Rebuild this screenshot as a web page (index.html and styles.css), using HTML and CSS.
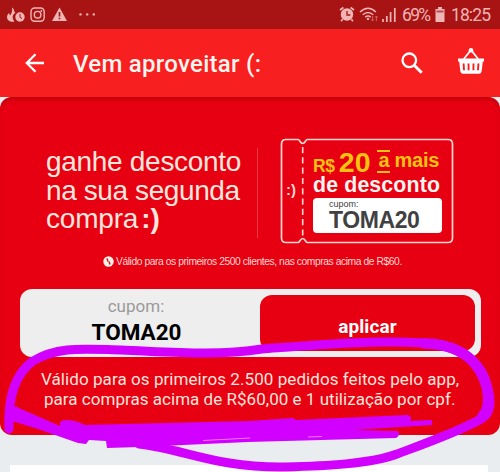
FILE: index.html
```html
<!DOCTYPE html>
<html lang="pt-BR">
<head>
<meta charset="utf-8">
<title>Vem aproveitar (:</title>
<link rel="stylesheet" href="styles.css">
</head>
<body>
<div class="screen">
  <header class="status">
    <svg class="status-left" width="100" height="29" viewBox="0 0 100 29">
      <path d="M12 7.500c3 2 1.500 4 3.500 5.500-3 1-4 5-1 8.500-4 1-7.500-1-7.500-4.500 0-2 1-3 2-4l1 2.500c2-2 2.500-5 2-8z" fill="#efb5b5"/>
      <circle cx="20" cy="17" r="4.700" fill="#efb5b5"/><path d="M20 14v3.300l2 1.200" fill="none" stroke="#a81414"/>
      <rect x="31" y="8" width="13.200" height="13.200" rx="3.600" fill="none" stroke="#efb5b5" stroke-width="1.400"/>
      <circle cx="37.600" cy="14.700" r="3.300" fill="none" stroke="#efb5b5" stroke-width="1.400"/><circle cx="41.400" cy="11" r=".9" fill="#efb5b5"/>
      <path d="M59.500 7.500L67 21H52z" fill="#efb5b5"/><path d="M59.500 12v4.400m0 1.300v1.600" stroke="#a81414" stroke-width="1.700"/>
      <g fill="#efb5b5"><circle cx="80.500" cy="14.400" r="1.200"/><circle cx="87.200" cy="14.400" r="1.200"/><circle cx="93.800" cy="14.400" r="1.200"/></g>
    </svg>
    <div class="status-right">
      <svg width="60" height="29" viewBox="0 0 60 29">
        <circle cx="9" cy="14.500" r="6.200" fill="#efb5b5"/>
        <path d="M2 10l3.400-2.500M16 10l-3.400-2.500M4.600 19.200l-1.500 2M13.400 19.200l1.500 2" stroke="#efb5b5" stroke-width="1.700"/>
        <path d="M9 11v4h3.300" fill="none" stroke="#a81414" stroke-width="1.300"/>
        <g fill="none" stroke="#efb5b5" stroke-width="1.500"><path d="M22 12q8-7.500 16 0M24.700 14.800q5.300-4.700 10.600 0M27.200 17.200q2.800-2.200 5.600 0"/></g>
        <circle cx="30" cy="18.900" r="1.200" fill="#efb5b5"/>
        <path d="M34.600 16v5m-1.400-1.600l1.400 1.600 1.400-1.600M38.400 21v-5m-1.400 1.600l1.400-1.600 1.400 1.600" fill="none" stroke="#d66" stroke-width=".9"/>
        <path d="M45 22v-3M48.800 22v-6M52.600 22V12M56.800 22V8" stroke="#efb5b5" stroke-width="1.700"/>
      </svg>
      <span class="level">69%</span>
      <svg class="battery" width="10" height="29" viewBox="0 0 10 29"><path d="M3 7h4v2h2.500v13h-9V9H3z" fill="#efb5b5"/><path d="M1.500 11.500h7" stroke="#b75050" stroke-width="2"/></svg>
      <span class="clock">18:25</span>
    </div>
  </header>

  <nav class="appbar">
    <svg class="back" width="20" height="20" viewBox="0 0 20 20"><path d="M19 10H2M10.500 1.300L1.800 10l8.700 8.700" fill="none" stroke="#fff" stroke-width="2.300"/></svg>
    <h1>Vem aproveitar (:</h1>
    <svg class="search" width="22" height="22" viewBox="0 0 22 22"><circle cx="8.300" cy="8.300" r="6.800" fill="none" stroke="#fff" stroke-width="2.300"/><path d="M13 13l7.700 7.700" stroke="#fff" stroke-width="3"/></svg>
    <svg class="basket" width="28" height="28" viewBox="0 0 28 28">
      <path d="M6.800 12l7.200-9 7.200 9" fill="none" stroke="#fff" stroke-width="1.800"/><circle cx="14" cy="3.300" r="2.300" fill="#fff"/>
      <path d="M1 11.500h26v3h-1.200L24.600 24.500q-.4 2.300-2.600 2.300H6q-2.200 0-2.600-2.300L2.200 14.500H1z" fill="#fff"/>
      <path d="M6.600 16.500l.4 6.800M11.500 16.500l.1 6.800M16.500 16.500l-.1 6.800M21.400 16.500l-.4 6.800" stroke="#f61e20" stroke-width="1.900"/>
    </svg>
  </nav>

  <main class="card">
    <section class="promo">
      <p class="headline"><span class="l1">ganhe desconto</span><span class="l2">na sua segunda</span><span class="l3">compra<b>:)</b></span></p>
      <div class="ticket">
        <svg class="outline" width="174" height="106" viewBox="0 0 174 106">
          <path d="M5 1.500h13c2 0 2 4 4.700 4s2.700-4 4.700-4H168q4.500 0 4.500 4.500v94q0 4.500-4.500 4.500H27.400c-2 0-2-4-4.700-4s-2.700 4-4.700 4H6q-4.500 0-4.500-4.500V6Q1.500 1.500 6 1.500" fill="none" stroke="#ffd7d2" stroke-width="1.700"/>
          <path d="M22.700 9v89" stroke="#ffd7d2" stroke-width="1.600" stroke-dasharray="6.200 4.100"/>
        </svg>
        <span class="smile">:)</span>
        <div class="offer">
          <div class="price"><span class="cur">R$</span><span class="amount">20</span><span class="a">a</span><span class="mais">mais</span></div>
          <div class="off">de desconto</div>
          <div class="code"><span>cupom:</span><strong>TOMA20</strong></div>
        </div>
      </div>
    </section>
    <p class="fine"><svg width="11" height="11" viewBox="0 0 11 11"><circle cx="5.500" cy="5.500" r="5.200" fill="#fff0ea"/><path d="M4 2.500l1 3M6 5.500l1 3" stroke="#d41420" stroke-width="1.500"/></svg><span>Válido para os primeiros 2500 clientes, nas compras acima de R$60.</span></p>
    <section class="coupon">
      <div class="coupon-code"><span>cupom:</span><strong>TOMA20</strong></div>
      <button class="apply">aplicar</button>
    </section>
    <p class="terms"><span class="t1">Válido para os primeiros 2.500 pedidos feitos pelo app,</span><span class="t2">para compras acima de R$60,00 e 1 utilização por cpf.</span></p>
  </main>
  <div class="next"></div>

  <svg class="marker" width="500" height="472" viewBox="0 0 500 472">
    <g fill="none" stroke="#d200ff" stroke-linecap="round" stroke-linejoin="round">
      <path d="M9 429C8 403 12 376 33 361C58 346 83 349 121 350C172 352 216 356 262 349C315 345 370 340 425 343C456 345 481 360 487 385C492 401 491 414 481 419C458 432 421 445 397 454C370 464 325 466 285 467C216 468 184 449 139 444" stroke-width="9"/>
      <path d="M425 343.500C452 344 468 355 475 364Q483 373 487 388Q491 408 482 417" stroke-width="10.500"/>
    </g>
    <path d="M10 407Q14 404 21 409L60 426L60 422Q65 418 78 422L85 425L250 421L293 418L296 420L408 415Q413 417 410 421L432 420V425L354 430L398 431Q401 435 396 438L248 442L140 447L107 448L106 441L89 440L86 444L78 443L38 429L12 421Z" fill="#d200ff"/>
    <path d="M203 440.500L250 438M308 437l14-.5" fill="none" stroke="#f49af6" stroke-width=".8"/>
  </svg>
</div>
</body>
</html>
```

FILE: styles.css
```css
* { box-sizing: border-box; }
body { margin: 0; font-family: Roboto, sans-serif; background: #e9edf0; overflow: hidden; }
p, h1 { margin: 0; }
svg { display: block; flex: none; }
.screen { position: relative; width: 500px; height: 472px; overflow: hidden; display: flex; flex-direction: column; background: #e9edf0; white-space: nowrap; }

.status { height: 29px; flex: none; display: flex; justify-content: space-between; background: #a81414; color: #efb5b5; font-size: 18px; line-height: 31px; }
.status-right { display: flex; width: 162px; }
.level { margin-left: 4px; width: 28px; font-size: 17.500px; letter-spacing: -1.700px; }
.battery { margin-left: 5px; }
.clock { margin-left: 6px; font-size: 17.500px; letter-spacing: -.9px; }

.appbar { height: 68px; flex: none; display: flex; align-items: center; background: #f81f20; padding-left: 25px; }
.appbar h1 { width: 328px; margin-left: 28px; padding-top: 1px; font-size: 24px; letter-spacing: .28px; font-weight: 500; color: #fff4ee; }
.basket { margin-left: 34px; margin-top: -4px; }

.card { height: 338px; flex: none; border-radius: 12px; background: #e60012; box-shadow: inset 0 4px 4px -2px #b8000c; padding: 41px 20px 0; }
.promo { display: flex; font-family: "Liberation Sans", sans-serif; height: 107px; }
.headline { width: 238px; height: 90px; margin-top: 10px; padding-left: 26px; border-right: 1px solid #ec3a43; font-size: 28px; line-height: 28.700px; color: #ffe6dd; }
.headline span { display: block; }
.l1 { letter-spacing: -.3px; }
.l2 { letter-spacing: -.4px; }
.l3 { letter-spacing: -.2px; }
.l3 b { margin-left: 3px; letter-spacing: 0; }
.ticket { position: relative; width: 174px; height: 106px; margin-left: 22px; display: flex; }
.outline { position: absolute; left: 0; top: 0; }
.smile { width: 33px; padding: 44px 0 0 6px; font-size: 15px; line-height: 15px; font-weight: bold; color: #ffd7d2; }
.offer { width: 129px; padding-top: 12px; font-weight: bold; }
.price { height: 24px; display: flex; align-items: baseline; line-height: 24px; color: #ffc20e; }
.cur { font-size: 17.500px; letter-spacing: -.3px; }
.amount { font-size: 28.500px; margin-left: 4px; }
.a { margin-left: 7px; width: 13px; height: 23px; border-top: 2px solid; border-bottom: 2px solid; text-align: center; font-size: 20px; line-height: 16px; align-self: flex-start; }
.mais { margin-left: 4px; font-size: 20px; letter-spacing: -.2px; position: relative; top: -5px; }
.off { height: 23px; font-size: 21.300px; letter-spacing: .15px; line-height: 23px; color: #fff3f0; }
.code { margin-top: 1px; width: 129px; height: 35px; border-radius: 4px; background: #fff; color: #414042; padding: 1px 0 0 16px; }
.code span { display: block; font-size: 9px; line-height: 10px; font-weight: normal; }
.code strong { display: block; font-size: 23px; line-height: 23px; letter-spacing: -.4px; }
.fine { margin: 9px 0 0 83px; height: 15px; display: flex; align-items: center; gap: 2px; font: 10.300px "Liberation Sans", sans-serif; color: #ffd5cf; letter-spacing: -.43px; }

.coupon { margin-top: 20px; width: 461px; height: 68px; border-radius: 12px; background: #eee; display: flex; padding: 6px 6px 6px 0; }
.coupon-code { width: 240px; text-align: center; }
.coupon-code span { display: block; width: 232px; padding-top: 1px; font-size: 17px; line-height: 20px; color: #999; }
.coupon-code strong { display: block; width: 233px; margin-top: 3px; font-size: 22.500px; line-height: 26px; color: #000; }
.apply { width: 215px; height: 56px; padding: 7px 0 0; border: 0; border-radius: 12px; background: #e60012; color: #fff; font: bold 19px Roboto, sans-serif; letter-spacing: .1px; }
.terms { margin-top: 12px; font-size: 17px; line-height: 20px; color: #ffe4da; }
.terms span { display: block; }
.t1 { padding-left: 21px; letter-spacing: .07px; }
.t2 { padding-left: 24px; letter-spacing: .03px; }
.next { margin: 30px 0 0 10px; width: 478px; height: 7px; background: #fff; }
.marker { position: absolute; left: 0; top: 0; pointer-events: none; }
```
